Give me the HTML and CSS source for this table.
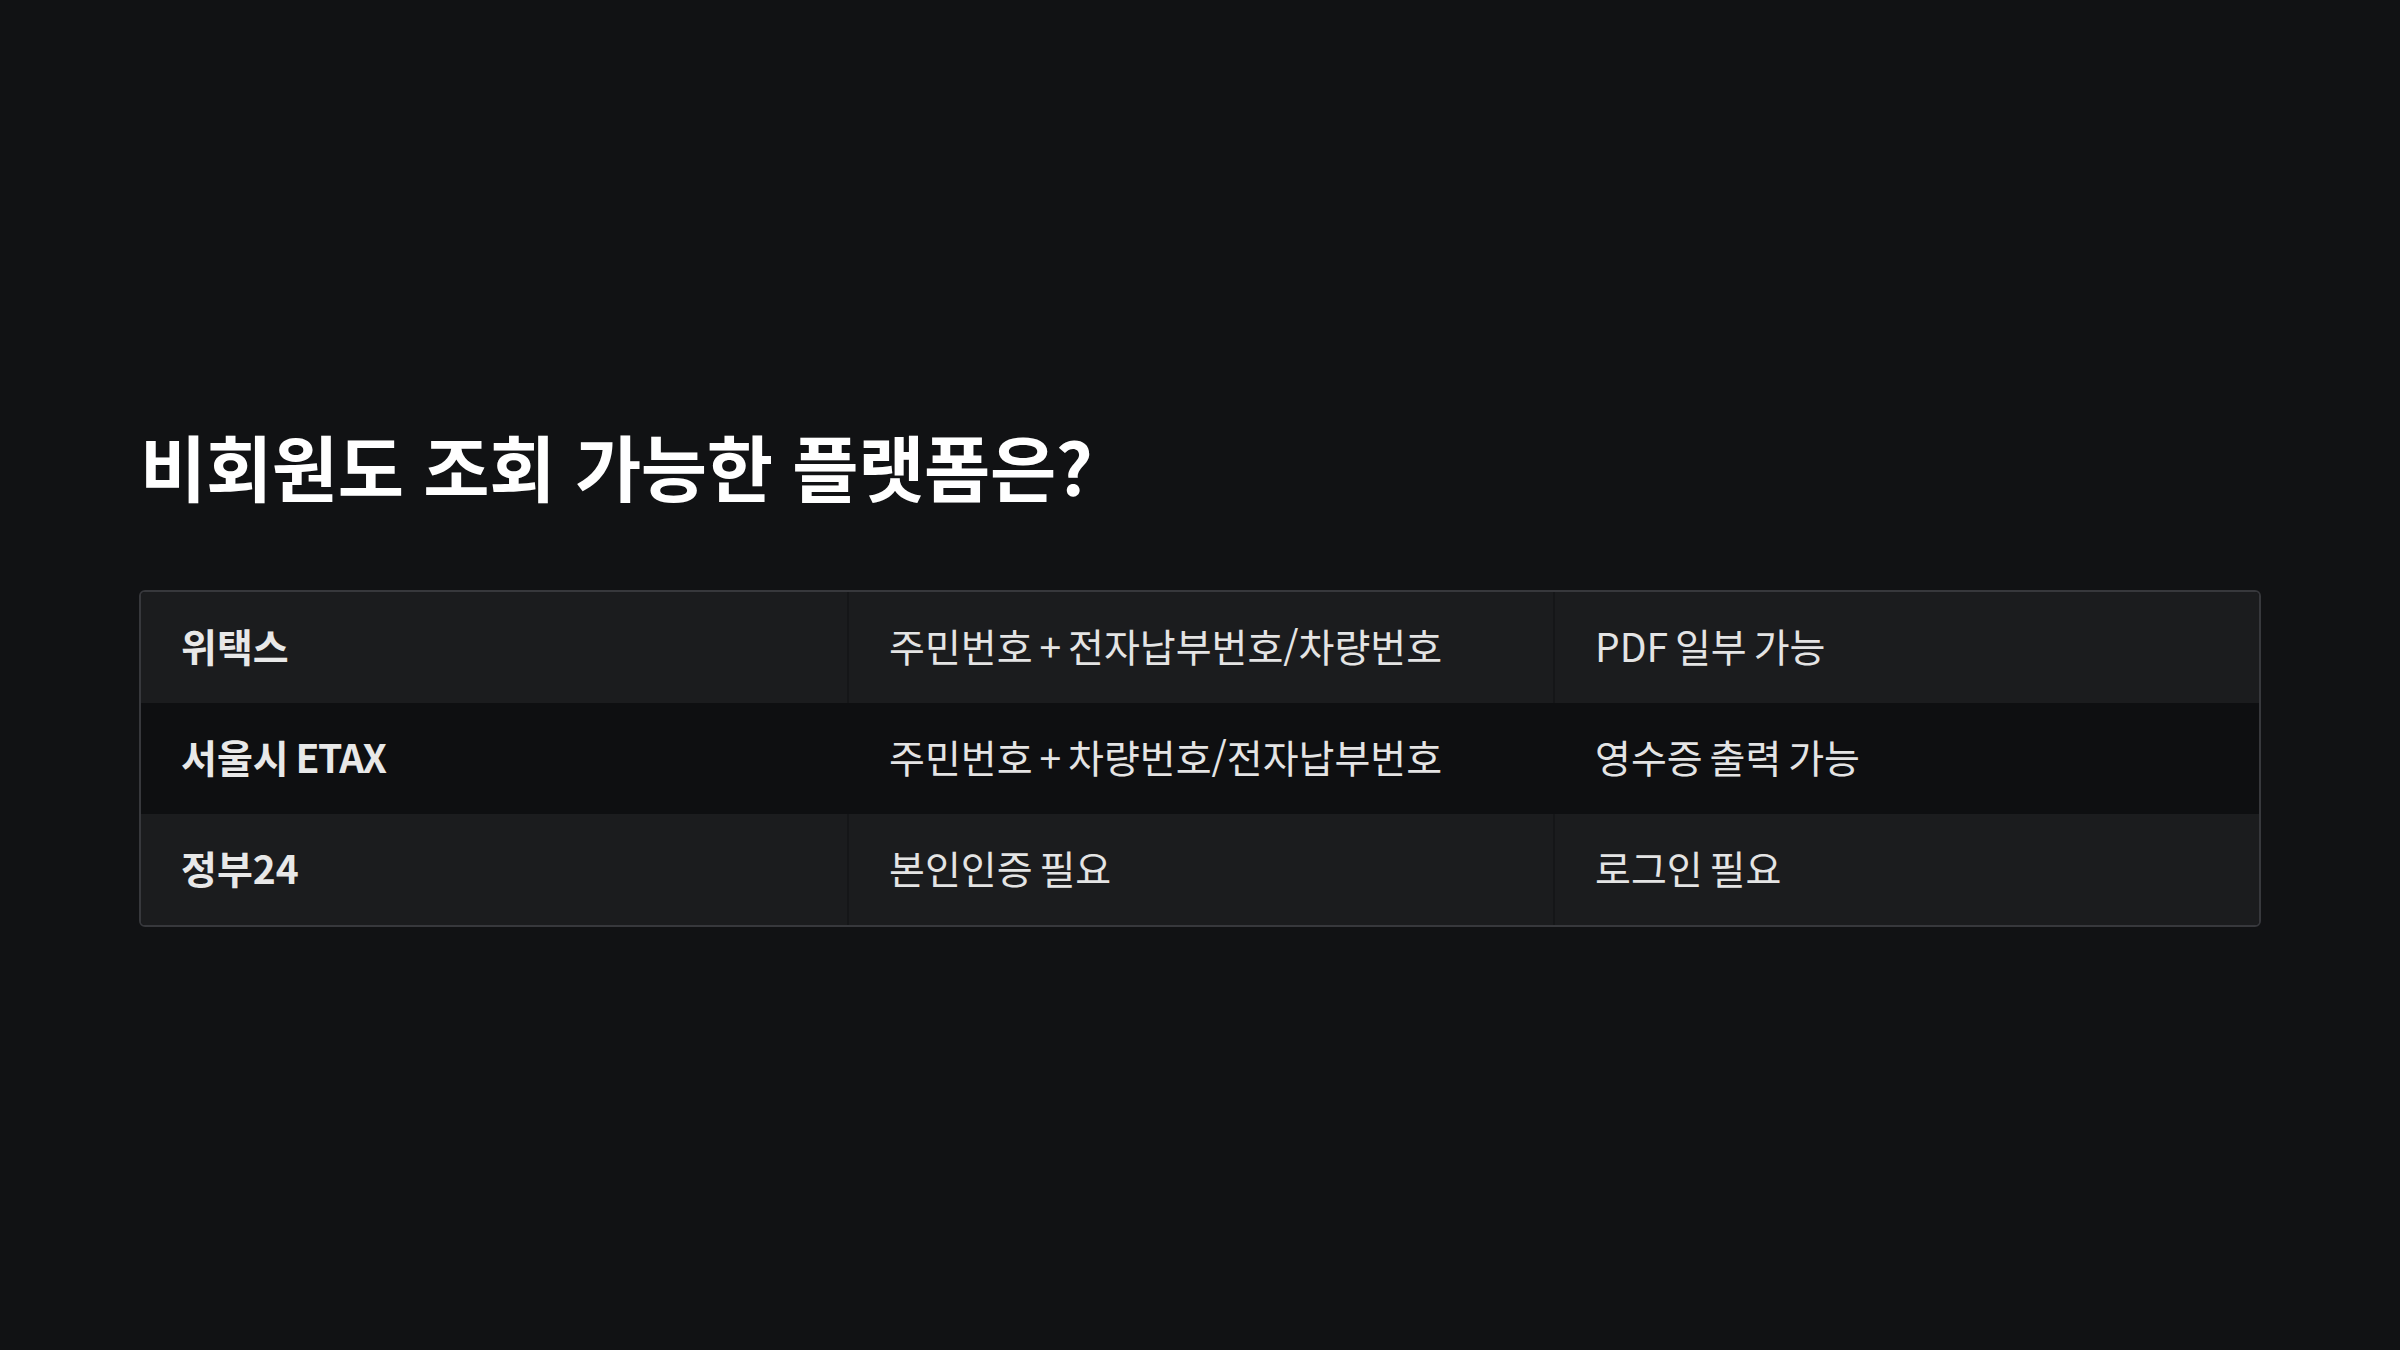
FILE: index.html
```html
<!DOCTYPE html>
<html lang="ko">
<head>
<meta charset="utf-8">
<link rel="stylesheet" href="styles.css">
</head>
<body>
<main class="page">
  <h1 class="title">비회원도 조회 가능한 플랫폼은?</h1>
  <div class="table">
    <div class="row light">
      <div class="cell name">위택스</div>
      <div class="cell">주민번호 + 전자납부번호/차량번호</div>
      <div class="cell">PDF 일부 가능</div>
    </div>
    <div class="row dark">
      <div class="cell name">서울시 <span class="latin">ETAX</span></div>
      <div class="cell">주민번호 + 차량번호/전자납부번호</div>
      <div class="cell">영수증 출력 가능</div>
    </div>
    <div class="row light">
      <div class="cell name">정부24</div>
      <div class="cell">본인인증 필요</div>
      <div class="cell">로그인 필요</div>
    </div>
  </div>
</main>
</body>
</html>
```
FILE: styles.css
```css
html, body {
  margin: 0;
  padding: 0;
  background: #111214;
}
body {
  font-family: "Noto Sans CJK KR", "Noto Sans", sans-serif;
  color: #e6e6e6;
}
.page {
  box-sizing: border-box;
  width: 2400px;
  height: 1350px;
  padding: 0 139px;
  display: flex;
  flex-direction: column;
  justify-content: center;
}
.title {
  margin: 0 0 84px 0;
  font-size: 72px;
  line-height: 82px;
  font-weight: 700;
  color: #ffffff;
  letter-spacing: -0.005em;
  padding-left: 1px;
}
.table {
  border: 2px solid #37383c;
  border-radius: 6px;
  overflow: hidden;
}
.row {
  display: grid;
  grid-template-columns: 1fr 1fr 1fr;
  height: 111px;
}
.row.light {
  background: #1b1c1e;
}
.row.dark {
  background: #0e0f11;
}
.cell {
  display: flex;
  align-items: center;
  padding: 0 40px 4px 40px;
  font-size: 39px;
  font-weight: 400;
  color: #e4e4e4;
  word-spacing: -4px;
  white-space: pre;
}
.row.light .cell + .cell {
  border-left: 2px solid #151618;
}
.row.dark .cell + .cell {
  border-left: 2px solid transparent;
}
.cell.name {
  font-weight: 700;
  color: #e8e8e8;
}
.latin {
  letter-spacing: -1.5px;
}
```
